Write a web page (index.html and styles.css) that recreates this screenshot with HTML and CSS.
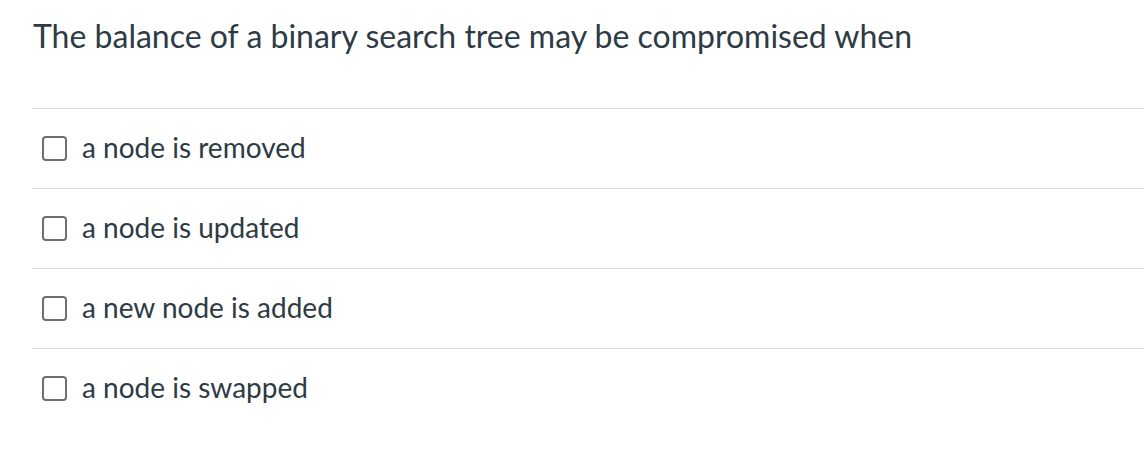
FILE: index.html
```html
<!DOCTYPE html>
<html>
<head>
<meta charset="utf-8">
<link rel="stylesheet" href="styles.css">
</head>
<body>
<div class="question">
  <div class="prompt">The balance of a binary search tree may be compromised when</div>
  <div class="answers">
    <label class="answer"><span class="box"></span><span class="text">a node is removed</span></label>
    <label class="answer"><span class="box"></span><span class="text">a node is updated</span></label>
    <label class="answer"><span class="box"></span><span class="text">a new node is added</span></label>
    <label class="answer"><span class="box"></span><span class="text">a node is swapped</span></label>
  </div>
</div>
</body>
</html>
```
FILE: styles.css
```css
html, body {
  margin: 0;
  padding: 0;
  background: #fff;
}
body {
  font-family: Lato, "Liberation Sans", sans-serif;
  color: #2d3b45;
}
.question {
  padding: 16px 0 0 32px;
}
.prompt {
  font-size: 32px;
  line-height: 40px;
  height: 40px;
  padding-left: 1px;
}
.answers {
  margin-top: 52px;
}
.answer {
  display: flex;
  align-items: center;
  height: 79px;
  border-top: 1px solid #dcdcdc;
  padding-left: 10px;
}
.box {
  width: 21px;
  height: 21px;
  border: 2px solid #6f6f6f;
  border-radius: 4px;
  flex: none;
}
.text {
  font-size: 28px;
  line-height: 34px;
  margin-left: 15px;
  margin-top: -4px;
}
```
